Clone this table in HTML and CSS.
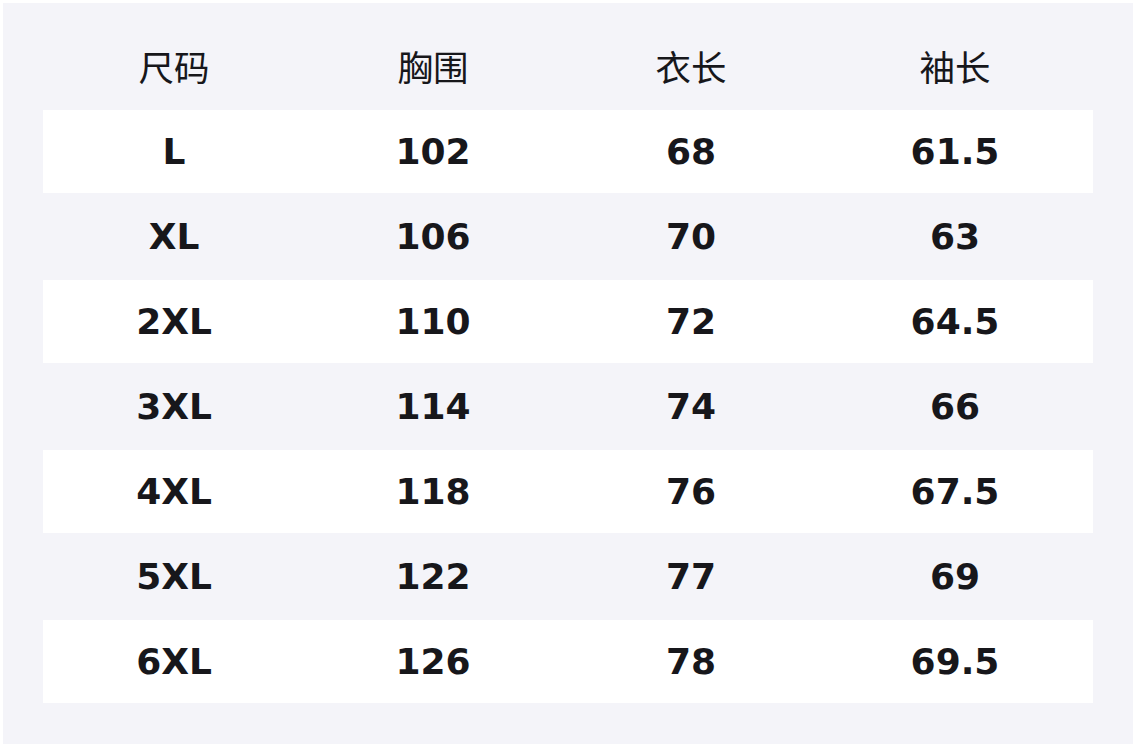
FILE: index.html
```html
<!DOCTYPE html>
<html lang="zh">
<head>
<meta charset="utf-8">
<link rel="stylesheet" href="styles.css">
</head>
<body>
<div class="board">
  <div class="table">
    <div class="row head"><div>尺码</div><div>胸围</div><div>衣长</div><div>袖长</div></div>
    <div class="row w"><div>L</div><div>102</div><div>68</div><div>61.5</div></div>
    <div class="row g"><div>XL</div><div>106</div><div>70</div><div>63</div></div>
    <div class="row w"><div>2XL</div><div>110</div><div>72</div><div>64.5</div></div>
    <div class="row g"><div>3XL</div><div>114</div><div>74</div><div>66</div></div>
    <div class="row w"><div>4XL</div><div>118</div><div>76</div><div>67.5</div></div>
    <div class="row g"><div>5XL</div><div>122</div><div>77</div><div>69</div></div>
    <div class="row w"><div>6XL</div><div>126</div><div>78</div><div>69.5</div></div>
  </div>
</div>
</body>
</html>
```
FILE: styles.css
```css
html, body { margin: 0; padding: 0; background: #ffffff; }
body { width: 1136px; height: 748px; padding: 3px; box-sizing: border-box; }
.board {
  width: 1130px;
  height: 741px;
  background: #f4f4f9;
  padding: 0 40px;
  box-sizing: border-box;
}
.table { width: 1050px; display: flex; flex-direction: column; }
.row {
  display: grid;
  grid-template-columns: 262px 256px 260px 268px 4px;
  align-items: center;
  justify-items: center;
  font-family: "DejaVu Sans", sans-serif;
  font-weight: bold;
  font-size: 36px;
  color: #17171b;
}
.row.head {
  height: 107px;
  padding-top: 18px;
  box-sizing: border-box;
  font-family: "Noto Sans CJK SC", "Noto Sans", sans-serif;
  font-weight: normal;
  font-size: 35.5px;
  color: #17171b;
}
.row.w { height: 83px; background: #ffffff; }
.row.g { height: 87px; }
```
